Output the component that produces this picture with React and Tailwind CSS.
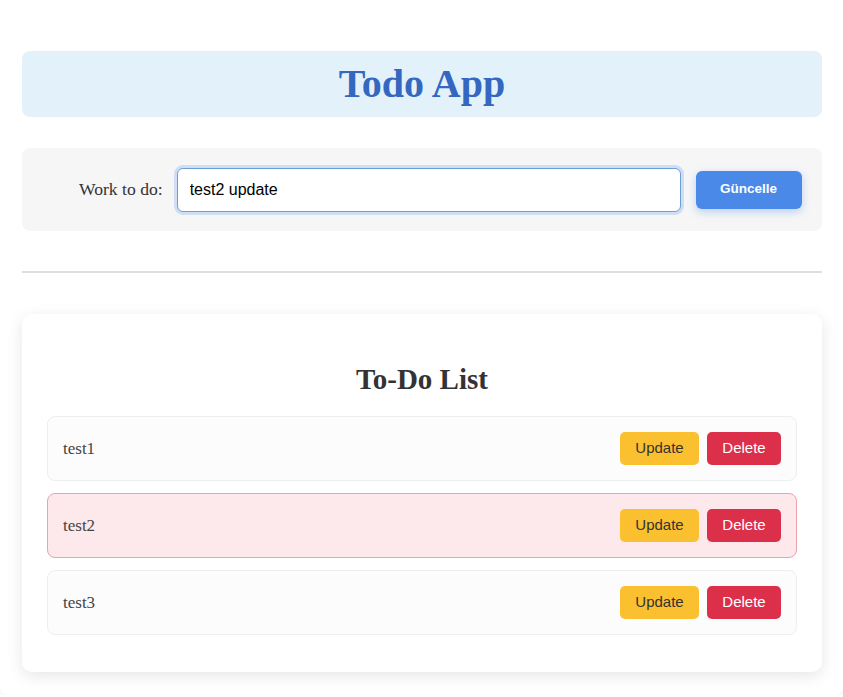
import React from 'react';

const todos = [
  { id: 1, text: 'test1', editing: false },
  { id: 2, text: 'test2', editing: true },
  { id: 3, text: 'test3', editing: false },
];

const serif = { fontFamily: '"Liberation Serif", "Times New Roman", serif' };

const TodoItem = ({ todo }) => {
  return (
    <li
      className={
        todo.editing
          ? 'flex items-center justify-between h-[65px] pl-[15px] pr-[15px] rounded-lg border border-[#eaa3aa] bg-[#fde8eb]'
          : 'flex items-center justify-between h-[65px] pl-[15px] pr-[15px] rounded-lg border border-[#eeeeee] bg-[#fcfcfc]'
      }
    >
      <span className="text-[17px] text-[#444]" style={serif}>
        {todo.text}
      </span>
      <div className="flex items-center gap-2 font-['Liberation_Sans',Arial,sans-serif]">
        <button className="h-[33px] w-[79px] rounded-[5px] bg-[#fbc02f] text-[15px] text-[#333]">
          Update
        </button>
        <button className="h-[33px] w-[74px] rounded-[5px] bg-[#dc2f4a] text-[15px] text-white">
          Delete
        </button>
      </div>
    </li>
  );
};

export default function App() {
  return (
    <div className="h-[695px] bg-white rounded-b-lg shadow-[0_2px_6px_rgba(0,0,0,0.06)] pl-[22px] pr-[21px] pt-[51px]">
      <header className="h-[66px] rounded-lg bg-[#e3f1fb] flex items-center justify-center">
        <h1 className="text-[40px] font-bold text-[#3468c0] leading-none" style={serif}>
          Todo App
        </h1>
      </header>

      <form
        className="mt-[31px] h-[83px] rounded-lg bg-[#f6f6f6] flex items-center pl-[57px] pr-[20px]"
        onSubmit={(e) => e.preventDefault()}
      >
        <label className="text-[17.6px] text-[#333] mr-[14px] whitespace-nowrap" style={serif}>
          Work to do:
        </label>
        <input
          className="h-[44px] w-[504px] rounded-[6px] border border-[#6b9fd6] bg-white px-[12px] text-[16px] text-black outline-none shadow-[0_0_0_3px_rgba(74,137,232,0.22)] font-['Liberation_Sans',Arial,sans-serif]"
          defaultValue="test2 update"
        />
        <button className="ml-[15px] h-[38px] w-[106px] rounded-[6px] bg-[#4a89e8] text-white text-[13.5px] font-bold shadow-[0_3px_8px_rgba(74,137,232,0.35)] font-['Liberation_Sans',Arial,sans-serif]">
          Güncelle
        </button>
      </form>

      <hr className="mt-[40px] border-0 h-[2px] bg-[#dedede]" />

      <section className="mt-[41px] rounded-[10px] bg-white shadow-[0_4px_16px_rgba(0,0,0,0.1)] px-[25px] pt-[51px] pb-[37px]">
        <h2 className="text-center text-[29px] font-bold text-[#333] leading-none mb-[22px]" style={serif}>
          To-Do List
        </h2>
        <ul className="flex flex-col gap-[12px]">
          {todos.map((todo) => (
            <TodoItem key={todo.id} todo={todo} />
          ))}
        </ul>
      </section>
    </div>
  );
}
